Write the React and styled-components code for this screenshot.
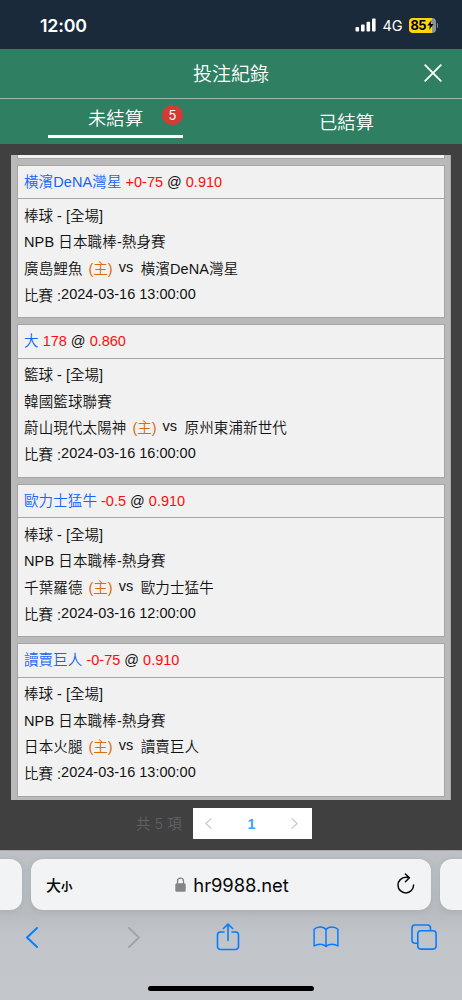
import React from "react";
import styled, { createGlobalStyle } from "styled-components";

const GlobalStyle = createGlobalStyle`
  * {
    box-sizing: border-box;
  }

  body {
    margin: 0;
    font-family: "Liberation Sans", "Noto Sans CJK TC", sans-serif;
  }

  svg {
    display: block;
    fill: none;
  }
`;

const Screen = styled.div`
  width: 462px;
  height: 1000px;
  display: flex;
  flex-direction: column;
  overflow: hidden;
  background: #404040;
`;

const StatusBar = styled.div`
  flex: none;
  height: 49px;
  padding: 1px 24px 0 40px;
  display: flex;
  align-items: center;
  background: #1a2a3b;
  color: #fff;
  font-family: Inter, sans-serif;
`;

const Clock = styled.div`
  flex: 1;
  font-size: 17.8px;
  font-weight: 600;
  letter-spacing: -0.2px;
`;

const Network = styled.div`
  margin: 1px 6px 0 6px;
  width: 20px;
  font-size: 14.5px;
  white-space: nowrap;
`;

const Battery = styled.div`
  width: 27px;
  height: 15px;
  display: flex;
  align-items: center;
  gap: 1px;
  padding-left: 2px;
  border-radius: 4px;
  background: linear-gradient(90deg, #fcd60b 85%, #8c949b 85%);
  color: #000;
  font-size: 12.8px;
  font-weight: 700;
  letter-spacing: -0.5px;
`;

const BatteryCap = styled.div`
  width: 1.5px;
  height: 5px;
  margin-left: 1px;
  border-radius: 0 2px 2px 0;
  background: #7d8790;
`;

const Header = styled.div`
  flex: none;
  height: 50px;
  display: grid;
  grid-template-columns: 60px 1fr 60px;
  align-items: center;
  border-bottom: 1px solid #a5b5ad;
  background: #2f7f62;
  color: #fff;
`;

const Title = styled.div`
  grid-column: 2;
  padding-top: 2px;
  text-align: center;
  font-size: 19px;
  font-weight: 350;
  line-height: 28px;
`;

const CloseButton = styled.div`
  justify-self: center;
  margin: 0 0 2px 2px;
`;

const Tabs = styled.div`
  flex: none;
  height: 45px;
  display: grid;
  grid-template-columns: 1fr 1fr;
  background: #2f7f62;
  color: #fff;
  font-size: 18.3px;
  font-weight: 350;
  line-height: 28px;
`;

const Tab = styled.div`
  display: flex;
  justify-content: center;
  padding-top: ${props => (props.$active ? "6px" : "10px")};
`;

const TabLabel = styled.div`
  position: relative;
  width: 135px;
  height: ${props => (props.$active ? "33px" : "28px")};
  text-align: center;
  border-bottom: ${props => (props.$active ? "3px solid #fff" : "0")};
`;

const Badge = styled.span`
  position: absolute;
  top: 0;
  right: 0;
  width: 21px;
  height: 20px;
  border-radius: 10px;
  background: #d53a35;
  font-family: Inter, sans-serif;
  font-size: 13px;
  font-weight: 400;
  line-height: 20px;
`;

const Content = styled.div`
  flex: none;
  height: 706px;
  padding: 11px 11px 0;
`;

const Panel = styled.div`
  height: 645px;
  padding: 0 5px 0 6px;
  display: flex;
  flex-direction: column;
  gap: 6px;
  border-right: 1px solid #a6a6a6;
  background: #b9b9b9;
  overflow: hidden;
`;

const CardTail = styled.div`
  flex: none;
  height: 3.5px;
  border: 1px solid #a5a5a5;
  border-top: 0;
  background: #f1f1f1;
`;

const Card = styled.div`
  flex: none;
  height: 153.5px;
  border: 1px solid #a5a5a5;
  background: #f1f1f1;
  color: #111;
  font-size: 14.5px;
  font-weight: 350;
  white-space: nowrap;
`;

const CardHead = styled.div`
  height: 33.5px;
  padding: 0 6px;
  border-bottom: 1px solid #a5a5a5;
  line-height: 32px;
`;

const CardBody = styled.div`
  padding: 2.5px 6px 0;
`;

const Line = styled.div`
  display: flex;
  height: 26.7px;
  line-height: 28px;
`;

const Pick = styled.span`
  color: #1763f5;
  letter-spacing: 0.1px;
`;

const Odds = styled.span`
  color: #fb0d0d;
`;

const Home = styled.span`
  margin-left: 6px;
  color: #dc6b0a;
`;

const Versus = styled.span`
  margin: -2px 7.5px 0 6px;
`;

const Team = styled.span`
  letter-spacing: 0.13px;
`;

const Kickoff = styled.span`
  margin-top: -2px;
`;

const Pagination = styled.div`
  display: flex;
  align-items: center;
  height: 31px;
  margin: 8px 0 0 125px;
  color: #606266;
  font-size: 14.5px;
  font-weight: 350;
`;

const Total = styled.div`
  width: 57px;
  padding-bottom: 2px;
  font-family: Inter, "Noto Sans CJK TC", sans-serif;
`;

const Pager = styled.div`
  width: 119px;
  height: 31px;
  padding: 0 14px 0 12px;
  display: flex;
  align-items: center;
  justify-content: space-between;
  background: #fff;
`;

const Page = styled.span`
  color: #409eff;
  font-family: "Liberation Sans", sans-serif;
  font-size: 14.5px;
  font-weight: 700;
`;

const Browser = styled.div`
  flex: 1;
  border-top: 1px solid #a4a8ad;
  background: linear-gradient(#bdc1c6, #b8bcc1 62px, #c1c5ca 85px, #c3c6cb);
`;

const AddressRow = styled.div`
  display: flex;
  justify-content: space-between;
  padding-top: 8px;
`;

const SideTab = styled.div`
  width: 22px;
  height: 51px;
  border-radius: ${props => (props.$right ? "12px 0 0 12px" : "0 12px 12px 0")};
  background: #f2f3f5;
  box-shadow: 0 1px 6px rgba(60, 70, 80, 0.14);
`;

const AddressBar = styled.div`
  width: 400px;
  height: 51px;
  padding: 0 15px;
  display: grid;
  grid-template-columns: 60px 1fr 60px;
  align-items: center;
  border-radius: 12px;
  background: #f2f3f5;
  box-shadow: 0 1px 6px rgba(60, 70, 80, 0.14);
  color: #090909;
`;

const TextSize = styled.div`
  padding-bottom: 1px;
  font-family: "Noto Sans CJK TC", sans-serif;
  font-size: 15px;
  font-weight: 500;

  small {
    font-size: 11.5px;
    font-weight: 700;
  }
`;

const Domain = styled.div`
  display: flex;
  align-items: center;
  justify-content: center;
  gap: 7px;
  padding-left: 2px;
  font-family: Inter, sans-serif;
  font-size: 18.4px;
  letter-spacing: -0.05px;
`;

const Reload = styled.div`
  justify-self: end;
  margin: 0 1px 2px 0;
`;

const Toolbar = styled.div`
  display: flex;
  align-items: center;
  justify-content: space-between;
  height: 54px;
  padding: 0 25px 0 19px;
`;

const ToolbarItem = styled.div`
  width: 26px;
  display: flex;
  justify-content: ${props => props.$align || "center"};
`;

const HomeIndicator = styled.div`
  width: 166px;
  height: 5.5px;
  margin: 21.5px auto 0;
  border-radius: 3px;
  background: #000;
`;

const SignalIcon = () => (
  <svg width="22" height="14" viewBox="0 0 22 14">
    <g fill="#fff">
      <rect x="0.5" y="9" width="3.6" height="4.6" rx="1" />
      <rect x="6" y="6.5" width="3.6" height="7.1" rx="1" />
      <rect x="11.5" y="3.7" width="3.6" height="9.9" rx="1" />
      <rect x="17" y="0.5" width="3.6" height="13.1" rx="1" />
    </g>
  </svg>
);

const BoltIcon = () => (
  <svg width="7" height="10" viewBox="0 0 7 11">
    <path d="M4.6 0 0 6.1h2.8L1.9 11 7 4.5H4z" fill="#000" />
  </svg>
);

const CloseIcon = () => (
  <svg width="18" height="18" viewBox="0 0 18 18" stroke="#fff" strokeWidth="1.8">
    <path d="M.7.7l16.6 16.6M17.3.7.7 17.3" />
  </svg>
);

const Chevron = ({ width, height, color, stroke, right }) => (
  <svg
    width={width}
    height={height}
    viewBox="0 0 12 21"
    stroke={color}
    strokeWidth={stroke}
    strokeLinecap="round"
    strokeLinejoin="round"
  >
    <path d={right ? "M1 1l10 9.5L1 20" : "M11 1 1 10.5 11 20"} />
  </svg>
);

const LockIcon = () => (
  <svg width="11" height="15" viewBox="0 0 11 15">
    <path d="M2.5 7V4.2a3 3 0 0 1 6 0V7" stroke="#858589" strokeWidth="1.3" />
    <rect x="0.3" y="6.3" width="10.4" height="8.5" rx="1.5" fill="#858589" />
  </svg>
);

const ReloadIcon = () => (
  <svg width="18" height="21" viewBox="0 0 18 21" stroke="#090909" strokeWidth="1.5">
    <path
      d="M12.2 4.8C11.2 4.4 10 4.2 8.8 4.3A7.8 7.8 0 1 0 16.6 12M8.4 1l4 3.8-4 4"
      strokeLinecap="round"
      strokeLinejoin="round"
    />
  </svg>
);

const ShareIcon = () => (
  <svg width="24" height="28" viewBox="0 0 24 28" stroke="#087cff" strokeWidth="1.6">
    <path
      d="M8 9H4.5a3 3 0 0 0-3 3v11.5a3 3 0 0 0 3 3h15a3 3 0 0 0 3-3V12a3 3 0 0 0-3-3H16M12 17.5V1.2M7.5 5.5 12 1l4.5 4.5"
      strokeLinecap="round"
      strokeLinejoin="round"
    />
  </svg>
);

const BookIcon = () => (
  <svg width="28" height="24" viewBox="0 0 28 24" stroke="#087cff" strokeWidth="1.6">
    <path
      d="M14 4C12.6 2.2 10.3 1.2 7.6 1.2 5 1.2 2.8 2 1.2 3.7v18C3 20.4 5 19.7 7.6 19.7c2.6 0 4.8.9 6.4 2.4 1.6-1.5 3.8-2.4 6.4-2.4 2.6 0 4.6.7 6.4 2v-18C25.2 2 23 1.2 20.4 1.2 17.7 1.2 15.4 2.2 14 4zm0 0v18"
      strokeLinejoin="round"
    />
  </svg>
);

const TabsIcon = () => (
  <svg width="26" height="26" viewBox="0 0 26 26" stroke="#087cff" strokeWidth="1.6">
    <path d="M6.8 19.2H4a3 3 0 0 1-3-3V4a3 3 0 0 1 3-3h12.5a3 3 0 0 1 3 3v2.8" />
    <rect x="6.8" y="6.8" width="18.3" height="18.3" rx="3" />
  </svg>
);

const bets = [
  {
    pick: "橫濱DeNA灣星",
    line: "+0-75",
    odds: "0.910",
    sport: "棒球",
    league: "NPB 日本職棒-熱身賽",
    home: "廣島鯉魚",
    away: "橫濱DeNA灣星",
    time: "2024-03-16 13:00:00"
  },
  {
    pick: "大",
    line: "178",
    odds: "0.860",
    sport: "籃球",
    league: "韓國籃球聯賽",
    home: "蔚山現代太陽神",
    away: "原州東浦新世代",
    time: "2024-03-16 16:00:00"
  },
  {
    pick: "歐力士猛牛",
    line: "-0.5",
    odds: "0.910",
    sport: "棒球",
    league: "NPB 日本職棒-熱身賽",
    home: "千葉羅德",
    away: "歐力士猛牛",
    time: "2024-03-16 12:00:00"
  },
  {
    pick: "讀賣巨人",
    line: "-0-75",
    odds: "0.910",
    sport: "棒球",
    league: "NPB 日本職棒-熱身賽",
    home: "日本火腿",
    away: "讀賣巨人",
    time: "2024-03-16 13:00:00"
  }
];

const BetCard = ({ bet }) => (
  <Card>
    <CardHead>
      <Pick>{bet.pick}</Pick> <Odds>{bet.line}</Odds> @ <Odds>{bet.odds}</Odds>
    </CardHead>
    <CardBody>
      <Line>{bet.sport} - [全場]</Line>
      <Line>
        <Team>{bet.league}</Team>
      </Line>
      <Line>
        <Team>{bet.home}</Team>
        <Home>(主)</Home>
        <Versus>vs</Versus>
        <Team>{bet.away}</Team>
      </Line>
      <Line>
        <span>比賽 :</span>
        <Kickoff>{bet.time}</Kickoff>
      </Line>
    </CardBody>
  </Card>
);

const App = () => (
  <Screen>
    <GlobalStyle />
    <StatusBar>
      <Clock>12:00</Clock>
      <SignalIcon />
      <Network>4G</Network>
      <Battery>
        85
        <BoltIcon />
      </Battery>
      <BatteryCap />
    </StatusBar>
    <Header>
      <Title>投注紀錄</Title>
      <CloseButton>
        <CloseIcon />
      </CloseButton>
    </Header>
    <Tabs>
      <Tab $active>
        <TabLabel $active>
          未結算
          <Badge>5</Badge>
        </TabLabel>
      </Tab>
      <Tab>
        <TabLabel>已結算</TabLabel>
      </Tab>
    </Tabs>
    <Content>
      <Panel>
        <CardTail />
        {bets.map(bet => (
          <BetCard key={bet.pick} bet={bet} />
        ))}
      </Panel>
      <Pagination>
        <Total>共 5 項</Total>
        <Pager>
          <Chevron width={7} height={11} color="#c0c4cc" stroke={2} />
          <Page>1</Page>
          <Chevron width={7} height={11} color="#c0c4cc" stroke={2} right />
        </Pager>
      </Pagination>
    </Content>
    <Browser>
      <AddressRow>
        <SideTab />
        <AddressBar>
          <TextSize>
            大<small>小</small>
          </TextSize>
          <Domain>
            <LockIcon />
            hr9988.net
          </Domain>
          <Reload>
            <ReloadIcon />
          </Reload>
        </AddressBar>
        <SideTab $right />
      </AddressRow>
      <Toolbar>
        <ToolbarItem>
          <Chevron width={14} height={21} color="#087cff" stroke={1.9} />
        </ToolbarItem>
        <ToolbarItem $align="flex-end">
          <Chevron width={18} height={21} color="#a0a4a9" stroke={1.9} right />
        </ToolbarItem>
        <ToolbarItem>
          <ShareIcon />
        </ToolbarItem>
        <ToolbarItem>
          <BookIcon />
        </ToolbarItem>
        <ToolbarItem>
          <TabsIcon />
        </ToolbarItem>
      </Toolbar>
      <HomeIndicator />
    </Browser>
  </Screen>
);

export default App;
